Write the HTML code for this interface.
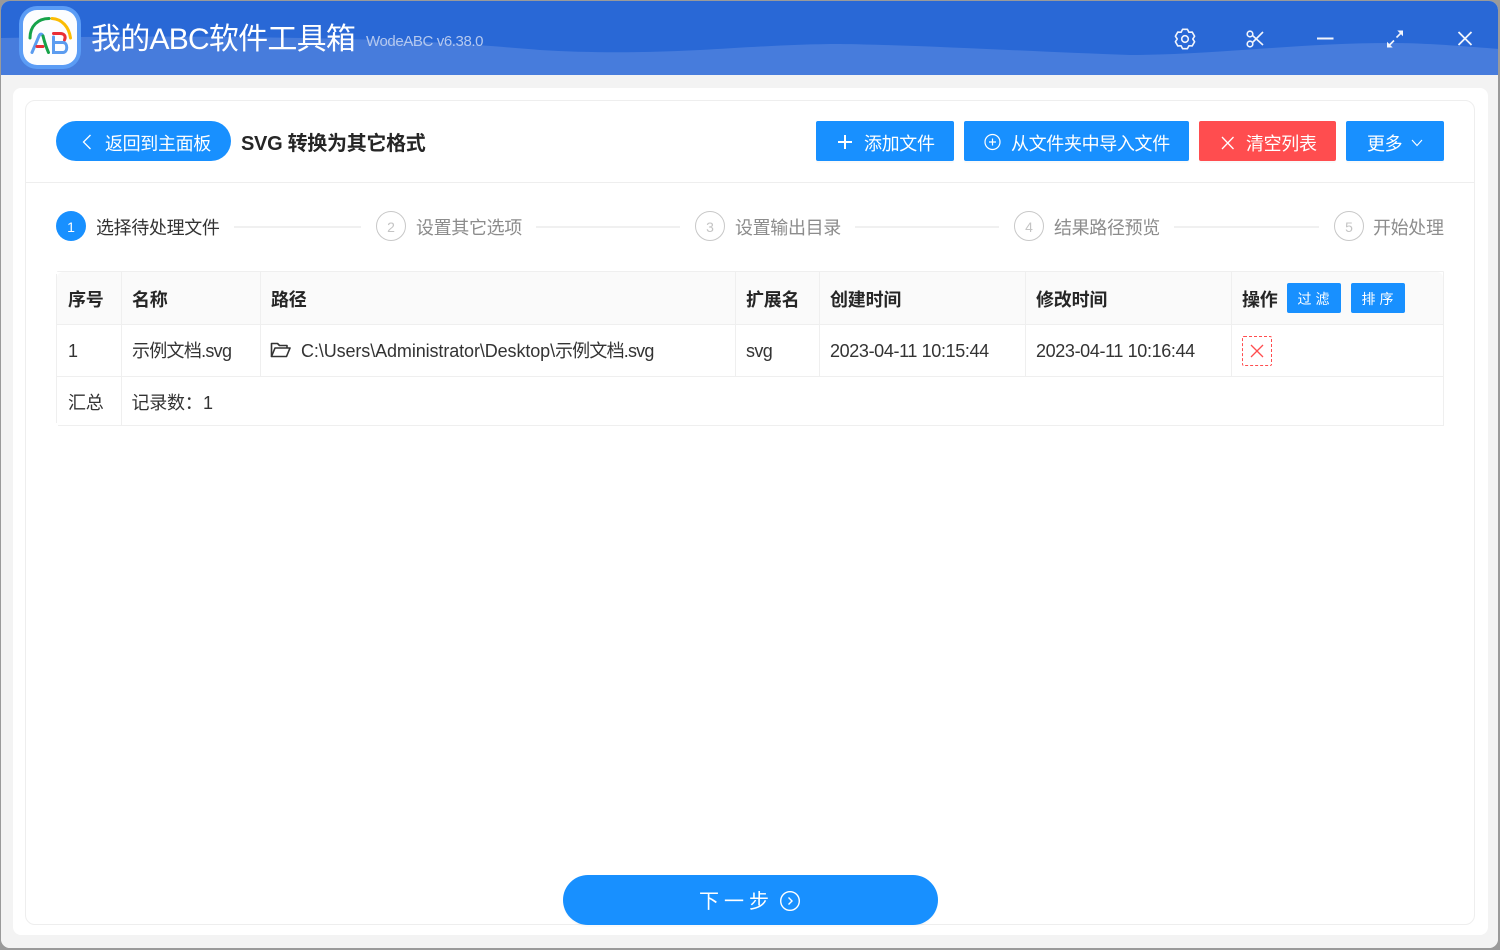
<!DOCTYPE html>
<html lang="zh-CN">
<head>
<meta charset="utf-8">
<title>我的ABC软件工具箱</title>
<style>
*{box-sizing:border-box;margin:0;padding:0}
html,body{width:1500px;height:950px;overflow:hidden;background:#9a9a9a;font-family:"Liberation Sans","Noto Sans CJK SC","WenQuanYi Zen Hei",sans-serif;color:#262626}
.abs,.t{position:absolute}
.t{white-space:nowrap;line-height:1}
#win{position:absolute;left:1px;top:1px;width:1497px;height:947px;background:#f3f3f3;border-radius:9px;overflow:hidden}
#panel{position:absolute;left:13px;top:88px;width:1475px;height:847px;background:#fff;border-radius:8px}
#card{position:absolute;left:25px;top:100px;width:1450px;height:825px;background:#fff;border:1px solid #eeeeee;border-radius:10px}
.btn{position:absolute;top:121px;height:40px;background:#1890ff;border-radius:2px;color:#fff;box-shadow:0 2px 0 rgba(0,0,0,.02)}
.w{color:#fff}
.line{position:absolute;top:226px;height:2px;background:#f0f0f0}
.circle{position:absolute;top:211px;width:30px;height:30px;border-radius:50%;border:1px solid #c8c8c8;color:#c4c4c4;font-size:14px;line-height:31px;text-align:center}
.step{position:absolute;top:218px;font-size:18px;line-height:20px;color:#8c8c8c;white-space:nowrap;letter-spacing:-.35px}
.h{background:#fafafa}
.b{position:absolute;background:#efefef}
.th{position:absolute;top:290px;font-size:18px;line-height:20px;font-weight:bold;color:#262626;white-space:nowrap;letter-spacing:-.2px}
.td{position:absolute;font-size:18px;line-height:20px;color:#333;white-space:nowrap;letter-spacing:-.25px}
.mini{position:absolute;top:283px;width:54px;height:30px;background:#1890ff;border-radius:2px;color:#fff;font-size:14px;line-height:32px;text-align:center;letter-spacing:4px;padding-left:3px}
</style>
</head>
<body>
<div id="win">
  <svg class="abs" style="left:-1px;top:-1px" width="1500" height="76" viewBox="0 0 1500 76">
    <rect width="1500" height="76" fill="#2968d6"/>
    <path d="M0 38C120 36 260 36 380 40C440 42 480 45 540 50C590 53 640 53 700 50C740 48 790 44 840 44C920 45 1040 52 1130 55C1210 55 1300 43 1390 43C1430 43 1470 47 1500 49V76H0Z" fill="#477cdc"/>
  </svg>
  <div style="position:absolute;left:0;top:74px;width:1497px;height:873px;background:#f3f3f3"></div>
</div>
<div id="panel"></div>
<div id="card"></div>

<!-- logo -->
<div class="abs" style="left:19px;top:6px;width:62px;height:63px;border-radius:18px;background:#5b9cf5"></div>
<div class="abs" style="left:23px;top:10px;width:54px;height:55px;border-radius:14px;background:#fcfdff"></div>
<svg class="abs" style="left:19px;top:6px" width="62" height="63" viewBox="0 0 62 63" fill="none" stroke-linecap="round">
  <path d="M11 32C11 20 19 12.500 30 12.500" stroke="#16a34a" stroke-width="3"/>
  <path d="M33 12.500C43 13 50 21 51.500 32" stroke="#fbbc04" stroke-width="3"/>
  <path d="M13 46.500L20 30C21 27.500 23 27.500 24 30" stroke="#5b9cf0" stroke-width="3"/>
  <path d="M18 40.500H24" stroke="#ea2e35" stroke-width="3"/>
  <path d="M24 30C25.500 36 27.500 42 29.500 46.500" stroke="#16a34a" stroke-width="3"/>
  <path d="M34.500 27.500H41C46 27.500 47 31 45.500 34" stroke="#ea2e35" stroke-width="3"/>
  <path d="M35 36.500H44C49 36.500 49 46.500 44 46.500H34.500V31" stroke="#5b9cf0" stroke-width="3"/>
</svg>

<div class="t w" style="left:91px;top:23px;font-size:30px;line-height:34px;letter-spacing:-.75px">我的ABC软件工具箱</div>
<div class="t" style="left:366px;top:34px;font-size:15px;line-height:16px;color:#b5c9ef;letter-spacing:-.4px">WodeABC v6.38.0</div>

<!-- window controls -->
<svg class="abs" style="left:1170px;top:24px" width="310" height="30" viewBox="0 0 310 30" fill="none" stroke="#f2f5fc" stroke-width="1.600">
  <path d="M12.580 5.300L17.420 5.300L18.900 8.250L22.190 8.050L24.610 12.240L22.800 15L24.610 17.760L22.190 21.950L18.900 21.750L17.420 24.700L12.580 24.700L11.100 21.750L7.810 21.950L5.390 17.760L7.200 15L5.390 12.240L7.810 8.050L11.100 8.250Z" stroke-linejoin="round"/>
  <circle cx="15" cy="15" r="3.300"/>
  <circle cx="80" cy="10" r="2.800"/><circle cx="80" cy="20" r="2.800"/>
  <path d="M82.500 11.500L93 21M82.500 18.500L93 8"/>
  <path d="M147 14.500H163.500" stroke-width="2"/>
  <path d="M218 22.500L224 16.500M226.500 13.500L232 8" />
  <path d="M217.500 19V23H221.500L217.500 19ZM232.500 11V7H228.500L232.500 11Z" fill="#f2f5fc" stroke-width="1"/>
  <path d="M288.500 8L301.500 21M301.500 8L288.500 21" stroke-width="1.800"/>
</svg>

<!-- header -->
<div class="abs" style="left:56px;top:121px;width:175px;height:40px;background:#1890ff;border-radius:20px"></div>
<svg class="abs" style="left:80px;top:133px" width="14" height="18" viewBox="0 0 14 18" fill="none" stroke="#fff" stroke-width="1.300"><path d="M10.500 2L3.500 9L10.500 16"/></svg>
<div class="t w" style="left:105px;top:134px;font-size:18px;line-height:20px;letter-spacing:-.35px">返回到主面板</div>
<div class="t" style="left:241px;top:134px;font-size:20px;line-height:21px;font-weight:bold;color:#262626;letter-spacing:-.3px">SVG 转换为其它格式</div>

<div class="btn" style="left:816px;width:138px"></div>
<svg class="abs" style="left:836px;top:133px" width="18" height="18" viewBox="0 0 18 18" stroke="#fff" stroke-width="2"><path d="M2 9H16M9 2V16"/></svg>
<div class="t w" style="left:864px;top:134px;font-size:18px;line-height:20px;letter-spacing:-.35px">添加文件</div>

<div class="btn" style="left:964px;width:225px"></div>
<svg class="abs" style="left:983px;top:133px" width="18" height="18" viewBox="0 0 18 18" fill="none" stroke="#fff" stroke-width="1.200"><circle cx="9.500" cy="9" r="7.500"/><path d="M6 9H13M9.500 5.500V12.500"/></svg>
<div class="t w" style="left:1011px;top:134px;font-size:18px;line-height:20px;letter-spacing:-.35px">从文件夹中导入文件</div>

<div class="btn" style="left:1199px;width:137px;background:#ff4d4f"></div>
<svg class="abs" style="left:1220px;top:135px" width="16" height="16" viewBox="0 0 16 16" fill="none" stroke="#fff" stroke-width="1.300"><path d="M2 2L13.500 14M13.500 2L2 14"/></svg>
<div class="t w" style="left:1246px;top:134px;font-size:18px;line-height:20px;letter-spacing:-.35px">清空列表</div>

<div class="btn" style="left:1346px;width:98px"></div>
<div class="t w" style="left:1367px;top:134px;font-size:18px;line-height:20px;letter-spacing:-.35px">更多</div>
<svg class="abs" style="left:1411px;top:138px" width="12" height="10" viewBox="0 0 12 10" fill="none" stroke="#fff" stroke-width="1.100"><path d="M1 2L6 7.500L11 2"/></svg>

<div class="abs" style="left:26px;top:182px;width:1448px;height:1px;background:#eeeeee"></div>

<!-- steps -->
<div class="abs" style="left:56px;top:211px;width:30px;height:30px;border-radius:50%;background:#1890ff;color:#fff;font-size:14px;line-height:33px;text-align:center">1</div>
<div class="step" style="left:96px;color:#333">选择待处理文件</div>
<div class="line" style="left:234px;width:127px"></div>
<div class="circle" style="left:376px">2</div>
<div class="step" style="left:416px">设置其它选项</div>
<div class="line" style="left:536px;width:144px"></div>
<div class="circle" style="left:695px">3</div>
<div class="step" style="left:735px">设置输出目录</div>
<div class="line" style="left:855px;width:144px"></div>
<div class="circle" style="left:1014px">4</div>
<div class="step" style="left:1054px">结果路径预览</div>
<div class="line" style="left:1174px;width:145px"></div>
<div class="circle" style="left:1334px">5</div>
<div class="step" style="left:1373px">开始处理</div>

<!-- table -->
<div class="abs h" style="left:57px;top:272px;width:1386px;height:52px;border-radius:6px 6px 0 0"></div>
<div class="b" style="left:57px;top:271px;width:1387px;height:1px;border-radius:4px 4px 0 0"></div>
<div class="b" style="left:56px;top:274px;width:1px;height:149px"></div>
<div class="b" style="left:1443px;top:272px;width:1px;height:154px"></div>
<div class="b" style="left:57px;top:324px;width:1387px;height:1px"></div>
<div class="b" style="left:57px;top:376px;width:1387px;height:1px"></div>
<div class="b" style="left:58px;top:425px;width:1386px;height:1px"></div>
<div class="b" style="left:121px;top:272px;width:1px;height:154px"></div>
<div class="b" style="left:260px;top:272px;width:1px;height:105px"></div>
<div class="b" style="left:735px;top:272px;width:1px;height:105px"></div>
<div class="b" style="left:819px;top:272px;width:1px;height:105px"></div>
<div class="b" style="left:1025px;top:272px;width:1px;height:105px"></div>
<div class="b" style="left:1231px;top:272px;width:1px;height:105px"></div>

<div class="th" style="left:68px">序号</div>
<div class="th" style="left:132px">名称</div>
<div class="th" style="left:271px">路径</div>
<div class="th" style="left:746px">扩展名</div>
<div class="th" style="left:830px">创建时间</div>
<div class="th" style="left:1036px">修改时间</div>
<div class="th" style="left:1242px">操作</div>
<div class="mini" style="left:1287px">过滤</div>
<div class="mini" style="left:1351px">排序</div>

<div class="td" style="left:68px;top:341px">1</div>
<div class="td" style="left:132px;top:341px;letter-spacing:-.72px">示例文档.svg</div>
<svg class="abs" style="left:270px;top:342px" width="21" height="16" viewBox="0 0 21 16" fill="none" stroke="#333" stroke-width="1.600" stroke-linejoin="round"><path d="M1.500 14.500V1.500H7.500L9.500 3.500H17V6"/><path d="M1.500 14.500H16.500L20 6H5L1.500 14.500Z"/></svg>
<div class="td" style="left:301px;top:341px;letter-spacing:-.1px">C:\Users\Administrator\Desktop\<span style="letter-spacing:-.8px">示例文档.svg</span></div>
<div class="td" style="left:746px;top:341px;letter-spacing:-.6px">svg</div>
<div class="td" style="left:830px;top:341px;letter-spacing:-.37px">2023-04-11 10:15:44</div>
<div class="td" style="left:1036px;top:341px;letter-spacing:-.37px">2023-04-11 10:16:44</div>
<div class="abs" style="left:1242px;top:336px;width:30px;height:30px;border:1px dashed #ff4d4f;border-radius:2px"></div>
<svg class="abs" style="left:1249px;top:343px" width="16" height="16" viewBox="0 0 16 16" fill="none" stroke="#ff4d4f" stroke-width="1.300"><path d="M2 2L14 14M14 2L2 14"/></svg>

<div class="td" style="left:68px;top:393px">汇总</div>
<div class="td" style="left:131.500px;top:393px">记录数：</div>
<div class="td" style="left:203px;top:393px">1</div>

<!-- next -->
<div class="abs" style="left:563px;top:875px;width:375px;height:50px;background:#1890ff;border-radius:25px;box-shadow:0 2px 0 rgba(0,0,0,.02)"></div>
<div class="t w" style="left:699px;top:891px;font-size:20px;line-height:22px;letter-spacing:5px">下一步</div>
<svg class="abs" style="left:779px;top:890px" width="22" height="22" viewBox="0 0 22 22" fill="none" stroke="#fff" stroke-width="1.400"><circle cx="11" cy="11" r="9.300"/><path d="M9.500 7.500L13 11L9.500 14.500"/></svg>
</body>
</html>
